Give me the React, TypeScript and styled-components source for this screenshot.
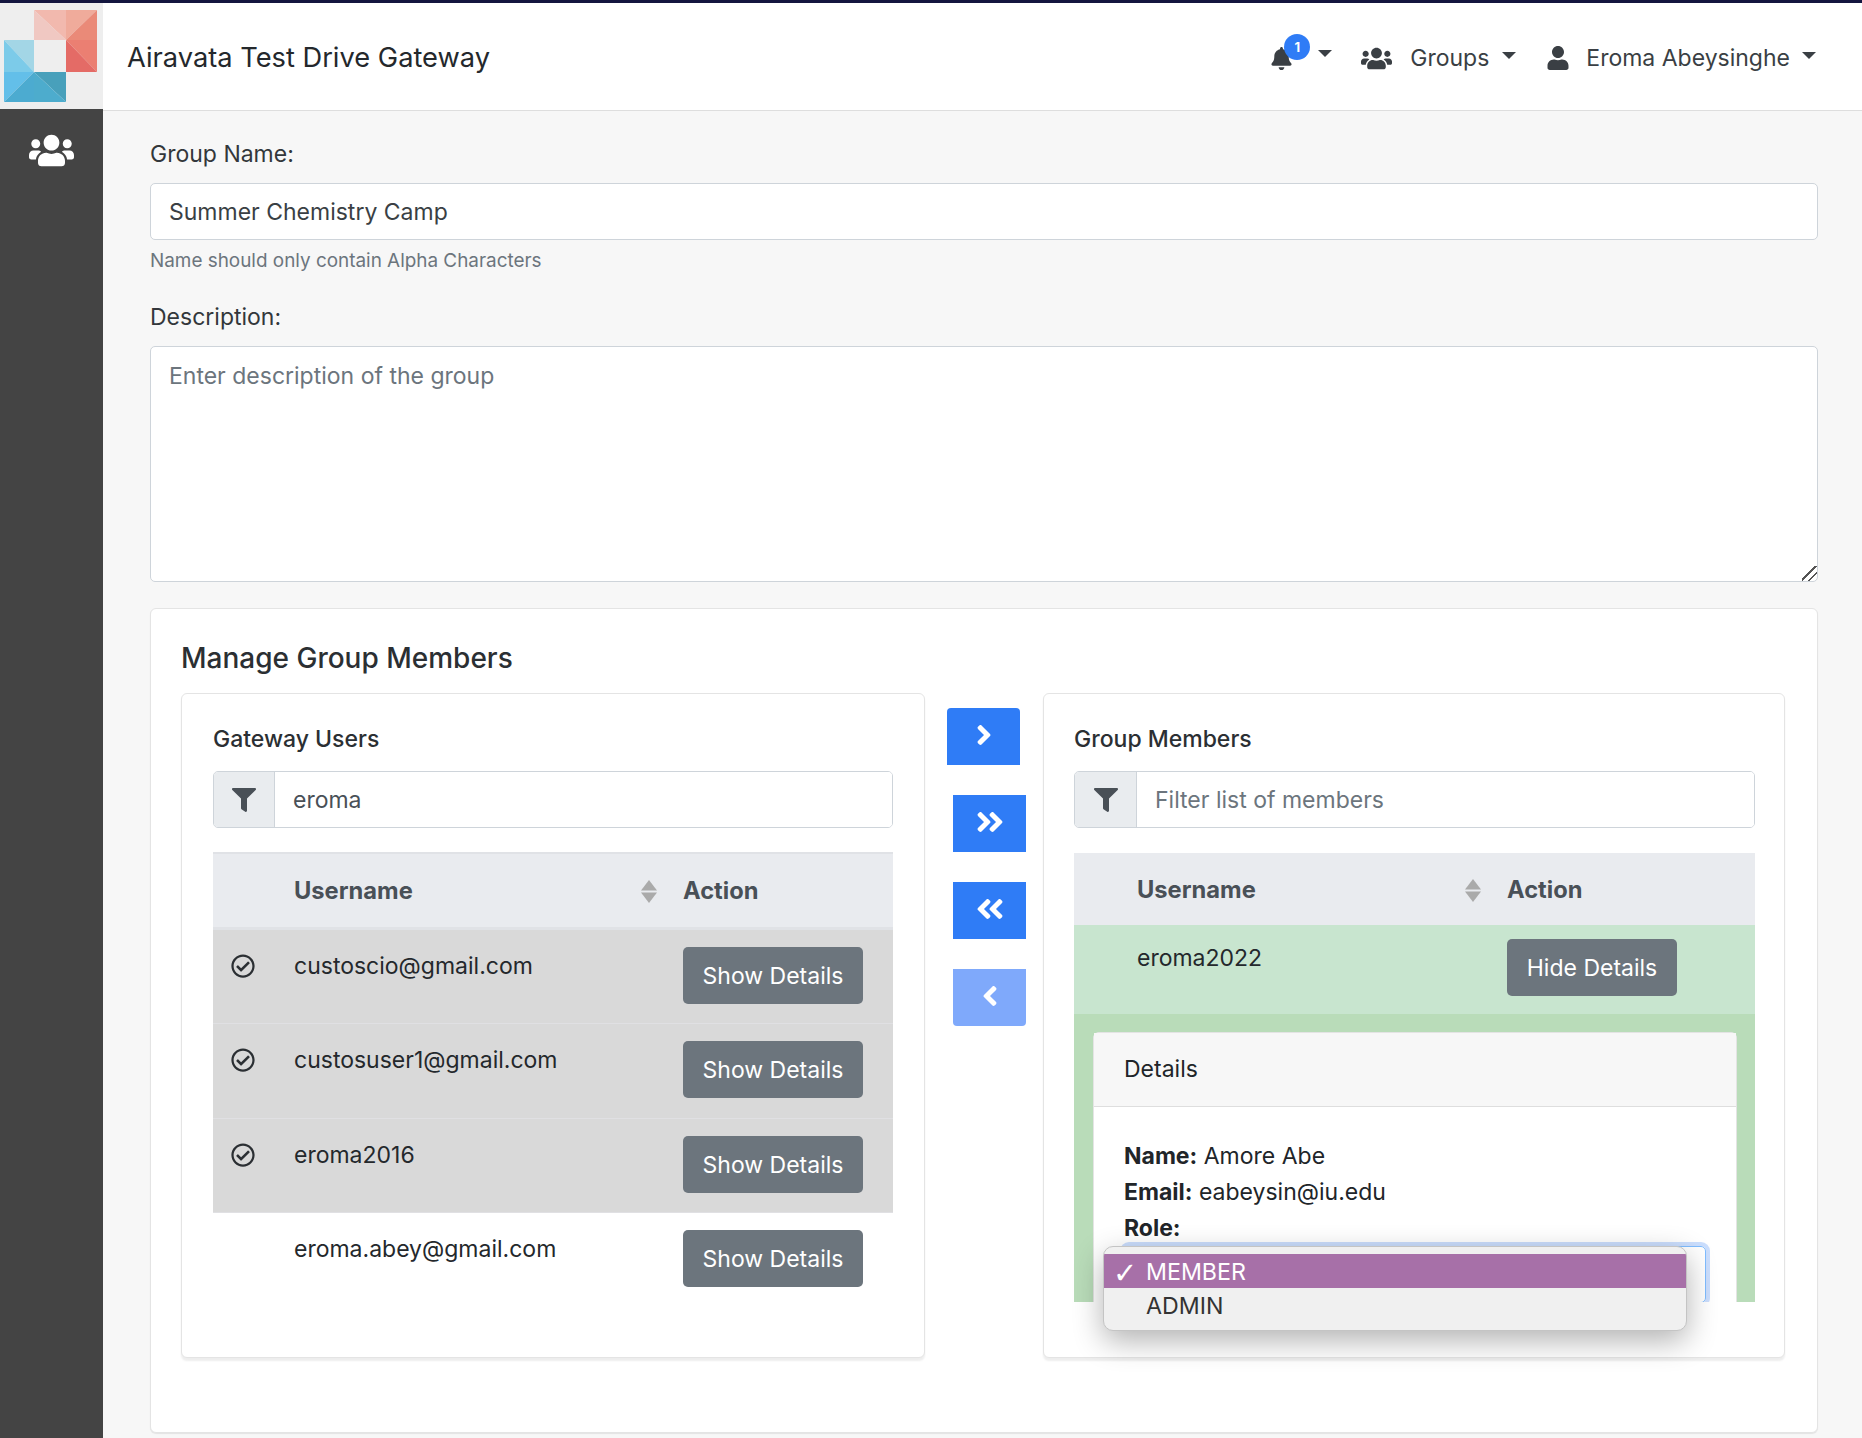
import React from "react";
import styled, { createGlobalStyle } from "styled-components";
import {
  FaAngleDoubleLeft,
  FaAngleDoubleRight,
  FaAngleLeft,
  FaAngleRight,
  FaBell,
  FaFilter,
  FaRegCheckCircle,
  FaUser,
  FaUsers,
} from "react-icons/fa";

const Global = createGlobalStyle`
  html, body { margin: 0; padding: 0; background: #f7f7f7; }
  body { font-family: Inter, "Liberation Sans", sans-serif; font-size: 23px; line-height: 28.5px; color: #212529; }
  * { box-sizing: border-box; }
`;

const Page = styled.div`
  width: 1862px;
  height: 1438px;
  overflow: hidden;
  display: flex;
  flex-direction: column;
  border-top: 3px solid #14163f;
`;

const Header = styled.header`
  height: 108px;
  flex: none;
  display: flex;
  align-items: center;
  padding-top: 3px;
  background: #fff;
  border-bottom: 1px solid #dedede;
`;

const LogoBox = styled.div`
  width: 103px;
  height: 106px;
  margin-top: -3px;
  align-self: flex-start;
  background: #eee;
  flex: none;
`;

const Brand = styled.div`
  margin-left: 24px;
  font-size: 27.25px;
  color: #24282c;
`;

const Nav = styled.nav`
  margin-left: auto;
  padding-right: 46px;
  display: flex;
  align-items: center;
  color: #3a3f44;
`;

const NavItem = styled.div<{ $left: number }>`
  display: flex;
  align-items: center;
  margin-left: ${(p) => p.$left}px;
  position: relative;
`;

const NavLabel = styled.span<{ $left: number }>`
  margin-left: ${(p) => p.$left}px;
`;

const Caret = styled.span<{ $left: number; $lift: number }>`
  width: 0;
  height: 0;
  margin-left: ${(p) => p.$left}px;
  margin-bottom: ${(p) => p.$lift}px;
  border-left: 7px solid transparent;
  border-right: 7px solid transparent;
  border-top: 7px solid #3a3f44;
`;

const Badge = styled.span`
  position: absolute;
  left: 14px;
  top: -13px;
  width: 26px;
  height: 26px;
  border-radius: 50%;
  background: #2f7cf6;
  color: #fff;
  font-size: 13px;
  font-weight: 700;
  line-height: 26px;
  text-align: center;
`;

const Body = styled.div`
  flex: 1;
  display: flex;
  min-height: 0;
`;

const Sidebar = styled.aside`
  width: 103px;
  flex: none;
  margin-top: -2px;
  background: #444;
  color: #fff;
  display: flex;
  justify-content: center;
  align-items: flex-start;
  padding-top: 19px;
  font-size: 45px;
`;

const Main = styled.main`
  flex: 1;
  padding: 29px 44px 0 47px;
`;

const FieldLabel = styled.label<{ $gap: number }>`
  display: block;
  margin-bottom: ${(p) => p.$gap}px;
  color: #33373b;
`;

const TextInput = styled.input`
  display: block;
  width: 100%;
  height: 57px;
  padding: 2px 18px 0;
  font: inherit;
  color: #3a3f44;
  background: #fff;
  border: 1px solid #ced4da;
  border-radius: 5px;
  outline: none;
  &::placeholder { color: #6c757d; opacity: 1; }
`;

const Help = styled.small`
  display: block;
  margin: 8px 0 30px;
  font-size: 18.9px;
  line-height: 25px;
  color: #6c757d;
`;

const TextArea = styled.textarea`
  display: block;
  width: 100%;
  height: 236px;
  padding: 15px 18px;
  font: inherit;
  color: #3a3f44;
  background: #fff;
  border: 1px solid #ced4da;
  border-radius: 5px;
  outline: none;
  resize: vertical;
  &::placeholder { color: #6c757d; opacity: 1; }
  &::-webkit-resizer {
    background: linear-gradient(
      135deg,
      transparent 42%,
      #555 42%,
      #555 50%,
      transparent 50%,
      transparent 68%,
      #555 68%,
      #555 76%,
      transparent 76%
    );
  }
`;

const ManageCard = styled.section`
  margin-top: 26px;
  height: 825px;
  background: #fff;
  border: 1px solid #e4e4e4;
  border-radius: 6px;
  padding: 31px 30px 0;
  box-shadow: 0 1px 1px rgba(0, 0, 0, 0.08);
`;

const ManageTitle = styled.h2`
  margin: 0 0 17px;
  font-size: 28px;
  line-height: 36px;
  font-weight: 500;
  color: #2b2f33;
`;

const Columns = styled.div`
  display: grid;
  grid-template-columns: 744px 118px 742px;
`;

const Panel = styled.div<{ $right: number; $left: number }>`
  position: relative;
  height: 665px;
  background: #fff;
  border: 1px solid #e4e4e4;
  border-radius: 6px;
  padding: 30px ${(p) => p.$right}px 0 ${(p) => p.$left}px;
  box-shadow: 0 3px 2px rgba(0, 0, 0, 0.07);
`;

const PanelTitle = styled.h3`
  margin: 0 0 17px;
  font-size: 23px;
  line-height: 30px;
  font-weight: 500;
  color: #2b2f33;
`;

const InputGroup = styled.div<{ $gap: number }>`
  display: flex;
  height: 57px;
  border: 1px solid #ced4da;
  border-radius: 5px;
  overflow: hidden;
  margin-bottom: ${(p) => p.$gap}px;
`;

const Addon = styled.div<{ $width: number }>`
  width: ${(p) => p.$width}px;
  flex: none;
  display: flex;
  align-items: center;
  justify-content: center;
  background: #e9ecef;
  border-right: 1px solid #ced4da;
  color: #495057;
  font-size: 24px;
`;

const GroupInput = styled.input`
  flex: 1;
  min-width: 0;
  border: 0;
  outline: none;
  padding: 2px 18px 0;
  font: inherit;
  color: #495057;
  &::placeholder { color: #6c757d; opacity: 1; }
`;

const Table = styled.table`
  width: 100%;
  border-collapse: collapse;
  table-layout: fixed;
`;

const HeadRow = styled.tr<{ $bordered?: boolean }>`
  height: ${(p) => (p.$bordered ? 75 : 72)}px;
  background: #e9ebef;
  border-top: ${(p) => (p.$bordered ? "2px solid #e0e2e6" : "0")};
  border-bottom: ${(p) => (p.$bordered ? "3px solid #e0e2e6" : "0")};
`;

const Th = styled.th<{ $width?: number }>`
  ${(p) => (p.$width ? `width: ${p.$width}px;` : "")}
  padding: 2px 14px 0;
  text-align: left;
  font-size: 23.7px;
  font-weight: 700;
  color: #495057;
`;

const ThInner = styled.div`
  display: flex;
  align-items: center;
  justify-content: space-between;
`;

const SortSvg = styled.svg`
  width: 16px;
  height: 23px;
  margin-right: -2px;
  fill: #aaa;
  flex: none;
`;

const SortIcon = () => (
  <SortSvg viewBox="0 0 16 23">
    <polygon points="8,0 16,10.5 0,10.5" />
    <polygon points="0,12.5 16,12.5 8,23" />
  </SortSvg>
);

const Row = styled.tr<{ $tone: "grey" | "green" | "none" }>`
  background: ${(p) => (p.$tone === "grey" ? "#d9d9d9" : p.$tone === "green" ? "#c8e5cf" : "transparent")};
  ${(p) => (p.$tone === "grey" ? "border-bottom: 1px solid #e0e0e3;" : "")}
`;

const Td = styled.td<{ $pad: number }>`
  padding: ${(p) => p.$pad}px 14px 14px;
  vertical-align: top;
  color: #24282c;
`;

const CheckCell = styled.td`
  padding: 24px 0 0 18px;
  vertical-align: top;
  font-size: 24px;
  line-height: 0;
  color: #2b2f33;
`;

const DetailsButton = styled.button<{ $width: number; $top: number; $bottom: number }>`
  display: block;
  width: ${(p) => p.$width}px;
  height: 57px;
  margin: ${(p) => p.$top}px 0 ${(p) => p.$bottom}px;
  padding: 2px 0 0;
  border: 0;
  border-radius: 5px;
  background: #6c757d;
  color: #fff;
  font: inherit;
`;

const ButtonCell = styled.td`
  padding: 0 14px;
  vertical-align: top;
`;

const Clip = styled.div`
  height: 449px;
  overflow: hidden;
`;

const DetailsRow = styled.div`
  background: #b9dcb9;
  padding: 18px 18px 0 19px;
  height: 288px;
`;

const DetailCard = styled.div`
  background: #fff;
  border: 1px solid #e4e4e4;
  border-radius: 6px;
  height: 320px;
`;

const DetailHeader = styled.div`
  height: 74px;
  padding-left: 30px;
  display: flex;
  align-items: center;
  background: #f7f7f7;
  border-bottom: 1px solid #dedede;
`;

const DetailBody = styled.div`
  padding: 31px 30px 0 30px;
  line-height: 36px;
`;

const FakeSelect = styled.div`
  height: 57px;
  border: 1px solid #80bdff;
  border-radius: 5px;
  box-shadow: 0 0 0 4px rgba(47, 124, 246, 0.25);
`;

const Menu = styled.div`
  position: absolute;
  left: 59px;
  top: 552px;
  width: 584px;
  height: 85px;
  padding-top: 7px;
  background: #f0f0f0;
  border-radius: 10px;
  border: 1px solid #c4c4c4;
  box-shadow: 0 10px 30px rgba(0, 0, 0, 0.3);
  font-size: 23.2px;
  overflow: hidden;
`;

const MenuItem = styled.div<{ $selected?: boolean }>`
  height: 34px;
  line-height: 36px;
  padding-left: 42px;
  position: relative;
  background: ${(p) => (p.$selected ? "#a770a8" : "transparent")};
  color: ${(p) => (p.$selected ? "#fff" : "#333")};
`;

const Tick = styled.span`
  position: absolute;
  left: 9px;
  top: 1px;
  font-family: "DejaVu Sans", sans-serif;
  font-size: 29px;
`;

const Transfer = styled.div`
  display: flex;
  flex-direction: column;
  gap: 30px;
  padding: 15px 0 0 28px;
`;

const ArrowButton = styled.button<{ $faded?: boolean; $nudge?: boolean; $round: "top" | "bottom" | "none" }>`
  width: 73px;
  height: 57px;
  margin-left: ${(p) => (p.$nudge ? -6 : 0)}px;
  border: 0;
  padding: 0 0 4px;
  border-radius: ${(p) => (p.$round === "top" ? "4px 4px 0 0" : p.$round === "bottom" ? "0 0 4px 4px" : "0")};
  background: ${(p) => (p.$faded ? "#7fa9fb" : "#2f7cf6")};
  color: #fff;
  font-size: 32px;
  display: flex;
  align-items: center;
  justify-content: center;
`;

const Strong = styled.strong`
  font-weight: 700;
`;

const Logo = () => (
  <svg width="103" height="106" viewBox="0 0 103 106">
    <polygon points="34,7 66,7 66,37" fill="#f2b9ae" />
    <polygon points="34,7 34,37 66,37" fill="#f0c8c2" />
    <polygon points="66,7 97,7 66,37" fill="#f0ab9b" />
    <polygon points="97,7 97,37 66,37" fill="#ea8a78" />
    <polygon points="66,37 97,37 97,69" fill="#eb7f72" />
    <polygon points="66,37 66,69 97,69" fill="#e46b66" />
    <polygon points="4,37 34,37 34,69" fill="#a3d6e6" />
    <polygon points="4,37 4,69 34,69" fill="#7ccbe9" />
    <polygon points="4,69 34,69 4,99" fill="#63bfe9" />
    <polygon points="34,69 34,99 4,99" fill="#4cabd0" />
    <polygon points="34,69 66,69 66,99" fill="#48a0bb" />
    <polygon points="34,69 34,99 66,99" fill="#4daccd" />
  </svg>
);

const gatewayUsers = [
  { name: "custoscio@gmail.com", checked: true },
  { name: "custosuser1@gmail.com", checked: true },
  { name: "eroma2016", checked: true },
  { name: "eroma.abey@gmail.com", checked: false },
];

export default function App() {
  return (
    <Page>
      <Global />
      <Header>
        <LogoBox>
          <Logo />
        </LogoBox>
        <Brand>Airavata Test Drive Gateway</Brand>
        <Nav>
          <NavItem $left={0}>
            <FaBell size={23} />
            <Badge>1</Badge>
            <Caret $left={25} $lift={10} />
          </NavItem>
          <NavItem $left={29}>
            <FaUsers size={31} />
            <NavLabel $left={18}>Groups</NavLabel>
            <Caret $left={13} $lift={6} />
          </NavItem>
          <NavItem $left={30}>
            <FaUser size={24} />
            <NavLabel $left={16}>Eroma Abeysinghe</NavLabel>
            <Caret $left={12} $lift={6} />
          </NavItem>
        </Nav>
      </Header>
      <Body>
        <Sidebar>
          <FaUsers />
        </Sidebar>
        <Main>
          <FieldLabel $gap={14}>Group Name:</FieldLabel>
          <TextInput readOnly value="Summer Chemistry Camp" />
          <Help>Name should only contain Alpha Characters</Help>
          <FieldLabel $gap={15}>Description:</FieldLabel>
          <TextArea readOnly placeholder="Enter description of the group" />
          <ManageCard>
            <ManageTitle>Manage Group Members</ManageTitle>
            <Columns>
              <Panel $left={31} $right={31}>
                <PanelTitle>Gateway Users</PanelTitle>
                <InputGroup $gap={24}>
                  <Addon $width={61}>
                    <FaFilter />
                  </Addon>
                  <GroupInput readOnly value="eroma" />
                </InputGroup>
                <Table>
                  <thead>
                    <HeadRow $bordered>
                      <Th $width={67} />
                      <Th $width={389}>
                        <ThInner>
                          Username
                          <SortIcon />
                        </ThInner>
                      </Th>
                      <Th>Action</Th>
                    </HeadRow>
                  </thead>
                  <tbody>
                    {gatewayUsers.map((u) => (
                      <Row key={u.name} $tone={u.checked ? "grey" : "none"}>
                        <CheckCell>{u.checked && <FaRegCheckCircle />}</CheckCell>
                        <Td $pad={22}>{u.name}</Td>
                        <ButtonCell>
                          <DetailsButton $width={180} $top={17} $bottom={19.5}>
                            Show Details
                          </DetailsButton>
                        </ButtonCell>
                      </Row>
                    ))}
                  </tbody>
                </Table>
              </Panel>
              <Transfer>
                <ArrowButton $nudge $round="top">
                  <FaAngleRight />
                </ArrowButton>
                <ArrowButton $round="none">
                  <FaAngleDoubleRight />
                </ArrowButton>
                <ArrowButton $round="none">
                  <FaAngleDoubleLeft />
                </ArrowButton>
                <ArrowButton $faded $round="bottom">
                  <FaAngleLeft />
                </ArrowButton>
              </Transfer>
              <Panel $left={30} $right={29}>
                <PanelTitle>Group Members</PanelTitle>
                <InputGroup $gap={25}>
                  <Addon $width={62}>
                    <FaFilter />
                  </Addon>
                  <GroupInput readOnly placeholder="Filter list of members" />
                </InputGroup>
                <Clip>
                  <Table>
                    <thead>
                      <HeadRow>
                        <Th $width={49} />
                        <Th $width={370}>
                          <ThInner>
                            Username
                            <SortIcon />
                          </ThInner>
                        </Th>
                        <Th>Action</Th>
                      </HeadRow>
                    </thead>
                    <tbody>
                      <Row $tone="green">
                        <td />
                        <Td $pad={19}>eroma2022</Td>
                        <ButtonCell>
                          <DetailsButton $width={170} $top={14} $bottom={18}>
                            Hide Details
                          </DetailsButton>
                        </ButtonCell>
                      </Row>
                    </tbody>
                  </Table>
                  <DetailsRow>
                    <DetailCard>
                      <DetailHeader>Details</DetailHeader>
                      <DetailBody>
                        <div>
                          <Strong>Name:</Strong> Amore Abe
                        </div>
                        <div>
                          <Strong>Email:</Strong> eabeysin@iu.edu
                        </div>
                        <div>
                          <Strong>Role:</Strong>
                        </div>
                        <FakeSelect />
                      </DetailBody>
                    </DetailCard>
                  </DetailsRow>
                </Clip>
                <Menu>
                  <MenuItem $selected>
                    <Tick>✓</Tick>MEMBER
                  </MenuItem>
                  <MenuItem>ADMIN</MenuItem>
                </Menu>
              </Panel>
            </Columns>
          </ManageCard>
        </Main>
      </Body>
    </Page>
  );
}
